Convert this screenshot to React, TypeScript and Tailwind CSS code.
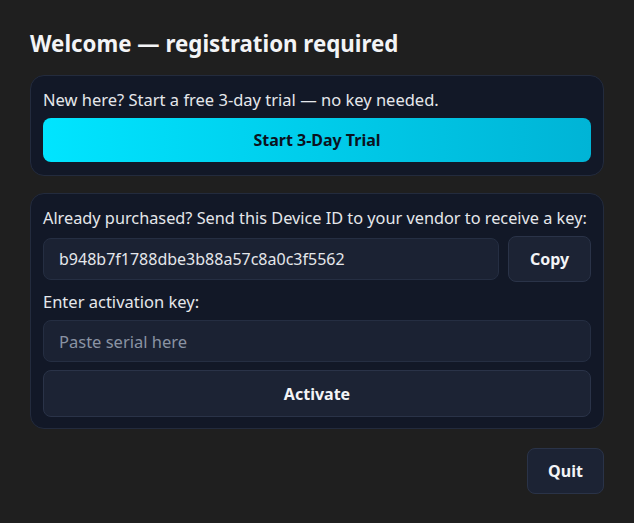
export default function App() {
  return (
    <main
      className="min-h-[523px] bg-[#1f1f1f] px-[30px] pt-[30px] pb-[28px] text-[#e5e7eb]"
      style={{ fontFamily: '"Segoe UI", "Noto Sans", sans-serif' }}
    >
      <h1 className="text-[22.3px] font-bold leading-[28px] text-[#f3f4f6]">Welcome — registration required</h1>

      {/* Trial */}
      <section className="mt-[17px] rounded-[14px] border border-[#232b3d] bg-[#121827] px-[12px] pt-[14px] pb-[13px]">
        <p className="text-[16.5px] leading-[20px] text-[#e5e7eb]">New here? Start a free 3-day trial — no key needed.</p>
        <button className="mt-[8px] flex h-[44px] w-full items-center justify-center rounded-[8px] bg-gradient-to-r from-[#00e5ff] to-[#00b4d6] text-[16px] font-bold text-[#0b1220]">
          Start 3-Day Trial
        </button>
      </section>

      {/* Activation */}
      <section className="mt-[17px] rounded-[14px] border border-[#232b3d] bg-[#121827] px-[12px] pt-[14px] pb-[11px]">
        <p className="whitespace-nowrap text-[16.3px] leading-[20px] text-[#e5e7eb]">
          Already purchased? Send this Device ID to your vendor to receive a key:
        </p>
        <div className="mt-[8px] flex items-center gap-[9px]">
          <div className="flex h-[42px] flex-1 items-center rounded-[8px] border border-[#252e42] bg-[#1b2233] px-[15px] text-[16px] text-[#e5e7eb]">
            b948b7f1788dbe3b88a57c8a0c3f5562
          </div>
          <button className="h-[46px] w-[83px] rounded-[8px] border border-[#2a3348] bg-[#1c2334] text-[16px] font-bold text-[#f3f4f6]">
            Copy
          </button>
        </div>
        <p className="mt-[10px] text-[16.5px] leading-[20px] text-[#e5e7eb]">Enter activation key:</p>
        <input
          placeholder="Paste serial here"
          className="mt-[8px] block h-[42px] w-full rounded-[8px] border border-[#252e42] bg-[#1b2233] px-[15px] text-[16.5px] text-[#e5e7eb] outline-none placeholder:text-[#8a93a3]"
        />
        <button className="mt-[8px] h-[47px] w-full rounded-[8px] border border-[#2a3348] bg-[#1c2334] text-[16px] font-bold text-[#f3f4f6]">
          Activate
        </button>
      </section>

      <div className="mt-[19px] flex justify-end">
        <button className="h-[46px] w-[77px] rounded-[8px] border border-[#2a3348] bg-[#1c2334] text-[16px] font-bold text-[#f3f4f6]">
          Quit
        </button>
      </div>
    </main>
  )
}
